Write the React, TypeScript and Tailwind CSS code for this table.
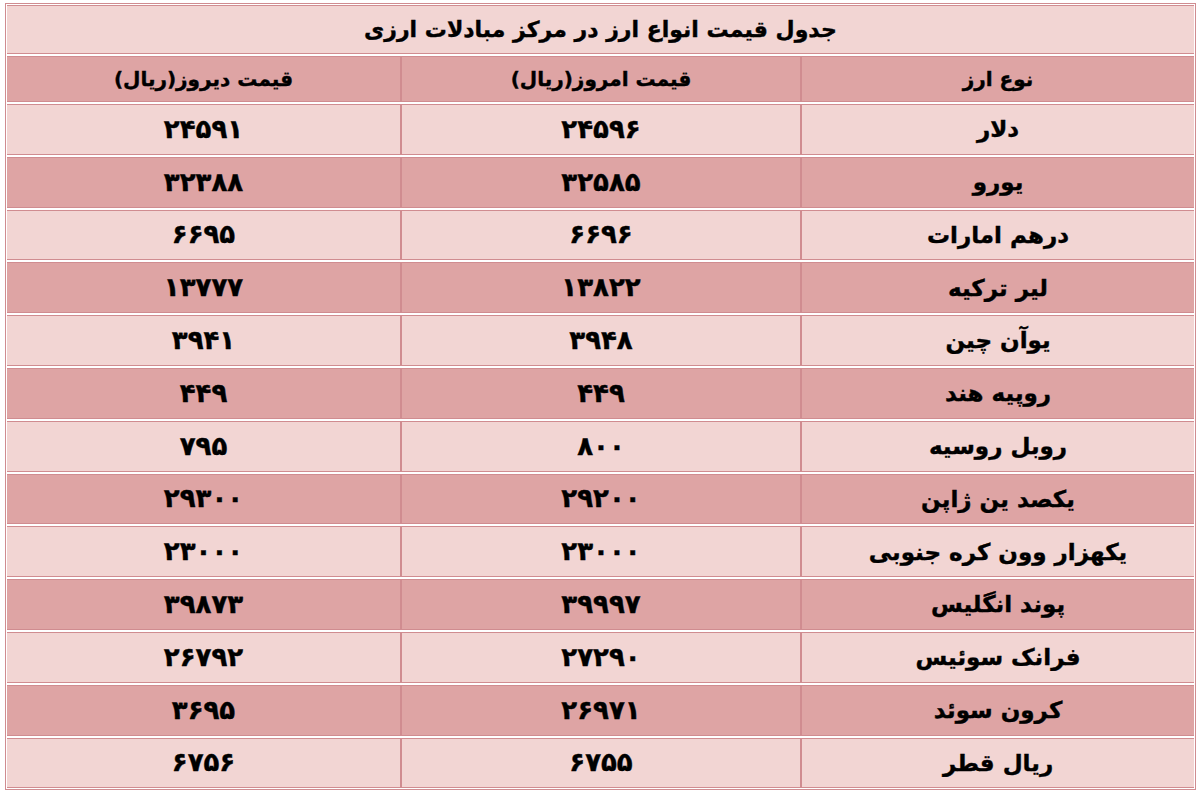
const ROWS: [string, string, string][] = [
  ['دلار', '۲۴۵۹۶', '۲۴۵۹۱'],
  ['یورو', '۳۲۵۸۵', '۳۲۳۸۸'],
  ['درهم امارات', '۶۶۹۶', '۶۶۹۵'],
  ['لیر ترکیه', '۱۳۸۲۲', '۱۳۷۷۷'],
  ['یوآن چین', '۳۹۴۸', '۳۹۴۱'],
  ['روپیه هند', '۴۴۹', '۴۴۹'],
  ['روبل روسیه', '۸۰۰', '۷۹۵'],
  ['یکصد ین ژاپن', '۲۹۲۰۰', '۲۹۳۰۰'],
  ['یکهزار وون کره جنوبی', '۲۳۰۰۰', '۲۳۰۰۰'],
  ['پوند انگلیس', '۳۹۹۹۷', '۳۹۸۷۳'],
  ['فرانک سوئیس', '۲۷۲۹۰', '۲۶۷۹۲'],
  ['کرون سوئد', '۲۶۹۷۱', '۳۶۹۵'],
  ['ریال قطر', '۶۷۵۵', '۶۷۵۶'],
];

const LIGHT = 'bg-[#f2d5d3]';
const DARK = 'bg-[#dea4a4]';

function Row({ cells, dark, header }: { cells: string[]; dark: boolean; header?: boolean }) {
  return (
    <div
      className={`grid grid-cols-[392px_400px_1fr] border-y border-[#d08c90] ${dark ? DARK : LIGHT} ${
        header ? 'h-[46px] text-[20px]' : 'h-[50.8px] text-[23px]'
      }`}
    >
      {cells.map((c, i) => (
        <div
          key={i}
          className={`flex items-center justify-center ${i > 0 ? 'border-r-2 border-[#d08c90]' : ''} ${
            !header && i > 0 ? 'text-[26px]' : ''
          }`}
        >
          {c}
        </div>
      ))}
    </div>
  );
}

export default function App() {
  return (
    <div className="h-[800px] w-[1200px] bg-white pl-[5px] pr-[4px] pt-[3px]">
      <div
        dir="rtl"
        className="flex flex-col gap-[2px] border border-[#d08c90] bg-white p-px font-bold text-black [-webkit-text-stroke:0.4px_black]"
        style={{ fontFamily: '"DejaVu Sans", sans-serif' }}
      >
        <div className={`flex h-[49px] items-center justify-center border-y border-[#d08c90] ${LIGHT} text-[22px]`}>
          جدول قیمت انواع ارز در مرکز مبادلات ارزی
        </div>
        <Row cells={['نوع ارز', 'قیمت امروز(ریال)', 'قیمت دیروز(ریال)']} dark header />
        {ROWS.map((r, i) => (
          <Row key={i} cells={r} dark={i % 2 === 1} />
        ))}
      </div>
    </div>
  );
}
